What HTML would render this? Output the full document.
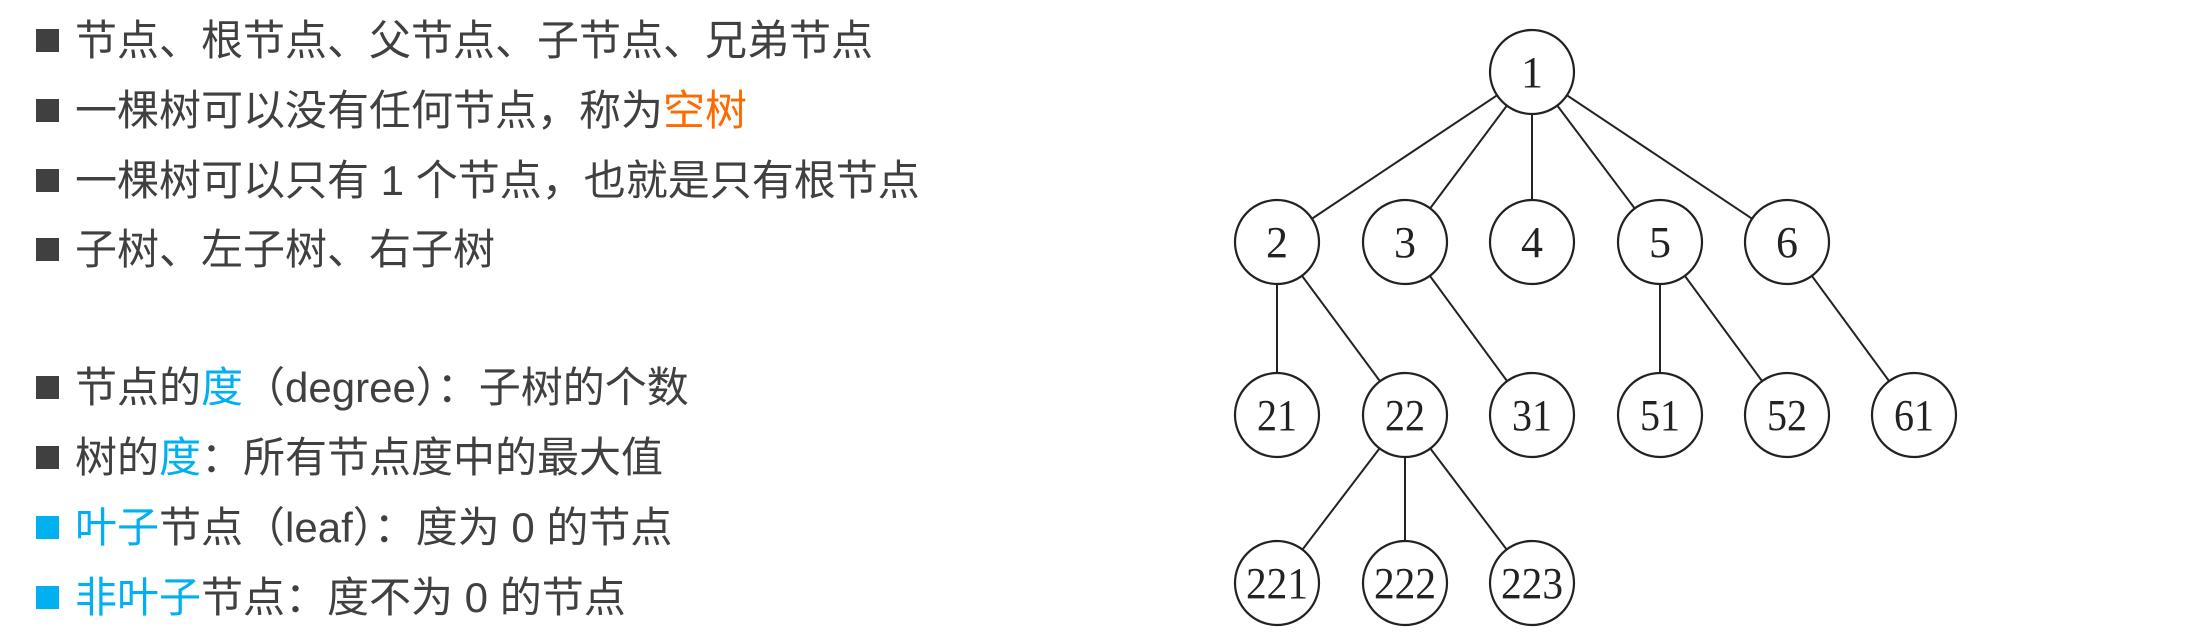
<!DOCTYPE html>
<html><head><meta charset="utf-8"><style>
html,body{margin:0;padding:0;background:#fff;width:2210px;height:644px;overflow:hidden;position:relative}
.r{position:absolute;left:36px;font-family:"Liberation Sans","Noto Sans CJK SC",sans-serif;font-size:42px;color:#404040;white-space:nowrap;line-height:48px;letter-spacing:0}
.r i{display:inline-block;width:23px;height:23px;background:#404040;margin-right:16px;vertical-align:middle;position:relative;top:-3px}
.r i.b{background:#00b0f0}
.bl{color:#00b0f0}.or{color:#ff6a00}
svg{position:absolute;left:0;top:0}
</style></head><body>
<div class="r" style="top:17px"><i></i>节点、根节点、父节点、子节点、兄弟节点</div>
<div class="r" style="top:87px"><i></i>一棵树可以没有任何节点，称为<span class="or">空树</span></div>
<div class="r" style="top:157px"><i></i>一棵树可以只有 1 个节点，也就是只有根节点</div>
<div class="r" style="top:226px"><i></i>子树、左子树、右子树</div>
<div class="r" style="top:364px"><i></i>节点的<span class="bl">度</span>（degree）：子树的个数</div>
<div class="r" style="top:434px"><i></i>树的<span class="bl">度</span>：所有节点度中的最大值</div>
<div class="r" style="top:504px"><i class="b"></i><span class="bl">叶子</span>节点（leaf）：度为 0 的节点</div>
<div class="r" style="top:574px"><i class="b"></i><span class="bl">非叶子</span>节点：度不为 0 的节点</div>
<svg width="2210" height="644" viewBox="0 0 2210 644">
<g stroke="#222" stroke-width="2" fill="none">
<line x1="1532" y1="72" x2="1277" y2="242"/><line x1="1532" y1="72" x2="1405" y2="242"/><line x1="1532" y1="72" x2="1532" y2="242"/><line x1="1532" y1="72" x2="1660" y2="242"/><line x1="1532" y1="72" x2="1787" y2="242"/>
<line x1="1277" y1="242" x2="1277" y2="415"/><line x1="1277" y1="242" x2="1405" y2="415"/><line x1="1405" y1="242" x2="1532" y2="415"/>
<line x1="1660" y1="242" x2="1660" y2="415"/><line x1="1660" y1="242" x2="1787" y2="415"/><line x1="1787" y1="242" x2="1914" y2="415"/>
<line x1="1405" y1="415" x2="1277" y2="583"/><line x1="1405" y1="415" x2="1405" y2="583"/><line x1="1405" y1="415" x2="1532" y2="583"/>
</g>
<g stroke="#222" stroke-width="2.2" fill="#fff">
<ellipse cx="1532" cy="72" rx="42" ry="42"/>
<ellipse cx="1277" cy="242" rx="42" ry="42"/><ellipse cx="1405" cy="242" rx="42" ry="42"/><ellipse cx="1532" cy="242" rx="42" ry="42"/><ellipse cx="1660" cy="242" rx="42" ry="42"/><ellipse cx="1787" cy="242" rx="42" ry="42"/>
<ellipse cx="1277" cy="415" rx="42" ry="42"/><ellipse cx="1405" cy="415" rx="42" ry="42"/><ellipse cx="1532" cy="415" rx="42" ry="42"/><ellipse cx="1660" cy="415" rx="42" ry="42"/><ellipse cx="1787" cy="415" rx="42" ry="42"/><ellipse cx="1914" cy="415" rx="42" ry="42"/>
<ellipse cx="1277" cy="583" rx="42" ry="42"/><ellipse cx="1405" cy="583" rx="42" ry="42"/><ellipse cx="1532" cy="583" rx="42" ry="42"/>
</g>
<g font-family="Liberation Serif,serif" font-size="44" fill="#222" text-anchor="middle">
<text x="1532" y="87">1</text>
<text x="1277" y="257">2</text><text x="1405" y="257">3</text><text x="1532" y="257">4</text><text x="1660" y="257">5</text><text x="1787" y="257">6</text>
<text x="1277" y="430" textLength="40" lengthAdjust="spacingAndGlyphs">21</text><text x="1405" y="430" textLength="40" lengthAdjust="spacingAndGlyphs">22</text><text x="1532" y="430" textLength="40" lengthAdjust="spacingAndGlyphs">31</text><text x="1660" y="430" textLength="40" lengthAdjust="spacingAndGlyphs">51</text><text x="1787" y="430" textLength="40" lengthAdjust="spacingAndGlyphs">52</text><text x="1914" y="430" textLength="40" lengthAdjust="spacingAndGlyphs">61</text>
<text x="1277" y="598" textLength="62" lengthAdjust="spacingAndGlyphs">221</text><text x="1405" y="598" textLength="62" lengthAdjust="spacingAndGlyphs">222</text><text x="1532" y="598" textLength="62" lengthAdjust="spacingAndGlyphs">223</text>
</g>
</svg>
</body></html>
